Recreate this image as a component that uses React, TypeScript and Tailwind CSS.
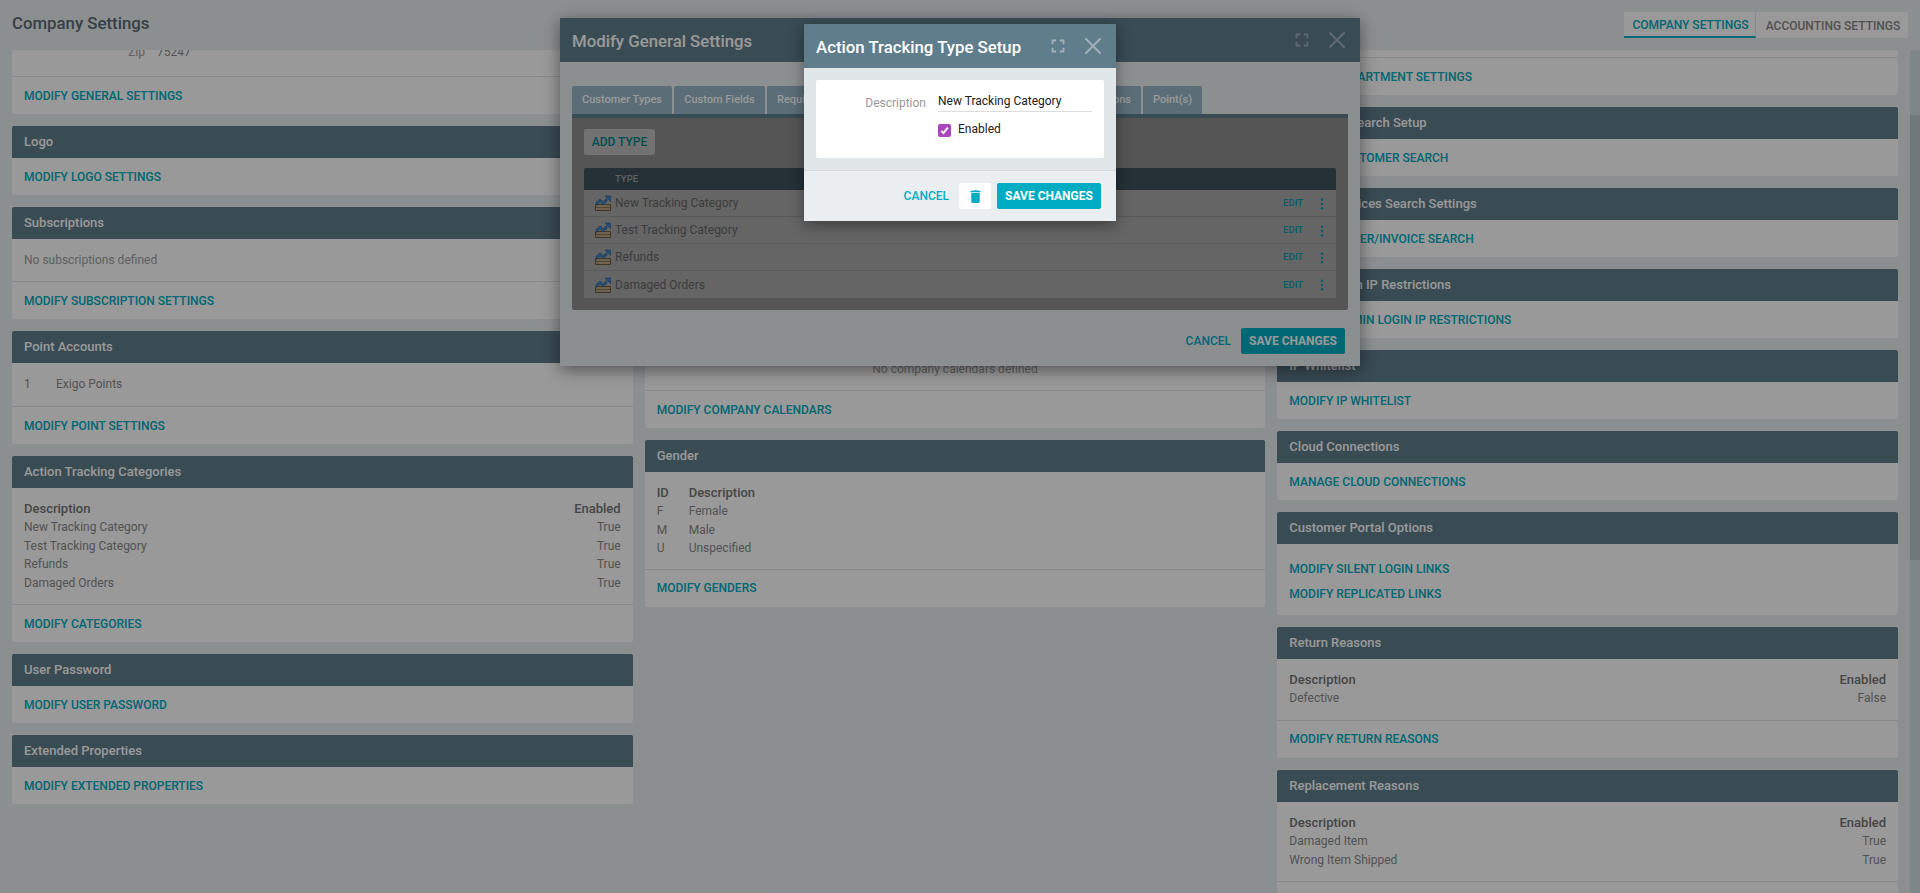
import React from 'react';
import { X } from 'lucide-react';

const roboto = { fontFamily: 'Roboto, sans-serif' };

function Fullscreen({ className }: { className?: string }) {
  return (
    <svg viewBox="0 0 24 24" fill="currentColor" className={className}>
      <path d="M7 14H5v5h5v-2H7v-3zm-2-4h2V7h3V5H5v5zm12 7h-3v2h5v-5h-2v3zM14 5v2h3v3h2V5h-5z" />
    </svg>
  );
}

function TrashIcon({ className }: { className?: string }) {
  return (
    <svg viewBox="0 0 24 24" fill="currentColor" className={className}>
      <path d="M6 19c0 1.1.9 2 2 2h8c1.1 0 2-.9 2-2V7H6v12zM19 4h-3.5l-1-1h-5l-1 1H5v2h14V4z" />
    </svg>
  );
}

function ChartIcon() {
  return (
    <svg viewBox="0 0 16 16" className="w-4 h-4 shrink-0">
      <path d="M0.5 9.5h15v6h-15z" fill="#b7a585" stroke="#6b5a40" strokeWidth="1" />
      <path d="M1 12.5h14" stroke="#8c7350" strokeWidth="1" />
      <path d="M1 7.5l4-3.5 3 2.5 4-3v3l-4 3-3-2.5-4 3.5z" fill="#3f7fbe" stroke="#2c6299" strokeWidth="0.6" />
      <path d="M10 1h5.5v5.5z" fill="#3f7fbe" stroke="#2c6299" strokeWidth="0.6" />
    </svg>
  );
}

function Card({ title, children }: { title?: string; children: React.ReactNode }) {
  return (
    <div className="bg-white rounded-[2px] overflow-hidden">
      {title && (
        <div className="h-8 bg-[#607d8b] text-white text-[13px] font-medium px-3 flex items-center">{title}</div>
      )}
      {children}
    </div>
  );
}

function Links({ label }: { label: string }) {
  return (
    <div className="h-[37px] flex items-center px-3">
      <a className="text-[12px] leading-none font-medium text-[#00acc1] uppercase">{label}</a>
    </div>
  );
}

function Body({ children }: { children: React.ReactNode }) {
  return <div className="px-3 py-3 border-b border-[#e2e6e9] text-[12px] leading-[18px] text-[#a0a0a0]">{children}</div>;
}

function DataBody({ children }: { children: React.ReactNode }) {
  return <div className="px-3 py-3 border-b border-[#e2e6e9] text-[12px] leading-[18.4px] text-[#8a8a8a]">{children}</div>;
}

function ValueTable({ rows }: { rows: string[][] }) {
  return (
    <DataBody>
      <div className="flex justify-between text-[13px] font-medium text-[#757575]">
        <span>Description</span>
        <span>Enabled</span>
      </div>
      {rows.map((r) => (
        <div key={r[0]} className="flex justify-between">
          <span>{r[0]}</span>
          <span>{r[1]}</span>
        </div>
      ))}
    </DataBody>
  );
}

const types = ['New Tracking Category', 'Test Tracking Category', 'Refunds', 'Damaged Orders'];

function GeneralModal() {
  return (
    <div className="absolute left-[560px] top-[18px] w-[800px] h-[348px] bg-[#eaeef1] shadow-[0_4px_16px_rgba(0,0,0,0.45)] flex flex-col">
      <div className="h-11 shrink-0 bg-[#607d8b] flex items-center pl-3 pr-[9px] text-white">
        <div className="text-[16.8px] font-medium flex-1 pt-[3px]">Modify General Settings</div>
        <Fullscreen className="w-[22px] h-[22px] opacity-40 mr-[10px]" />
        <X className="w-7 h-7 opacity-40" strokeWidth={1.7} />
      </div>
      <div className="px-3 pt-6 flex gap-[2px] h-[52px] shrink-0 text-white text-[11px] font-medium">
        <div className="h-7 w-[100px] rounded-t-[2px] bg-[#98b7c8] flex items-center justify-center">Customer Types</div>
        <div className="h-7 w-[91px] rounded-t-[2px] bg-[#98b7c8] flex items-center justify-center">Custom Fields</div>
        <div className="h-7 w-[110px] rounded-t-[2px] bg-[#98b7c8] px-[10px] flex items-center">Required Fields</div>
        <div className="h-7 w-[160px] rounded-t-[2px] bg-[#98b7c8]" />
        <div className="h-7 w-[100px] rounded-t-[2px] bg-[#98b7c8] px-[10px] flex items-center justify-end">Options</div>
        <div className="h-7 w-[59px] rounded-t-[2px] bg-[#98b7c8] flex items-center justify-center">Point(s)</div>
      </div>
      <div className="mx-3 h-[196px] shrink-0 border-t-4 border-[#607d8b] bg-[#8e8e8e] rounded-b-[2px] px-3 pt-[11px]">
        <div className="h-[26px] w-[71px] rounded-[2px] bg-[#bebebe] text-[#00818f] text-[12px] font-medium flex items-center justify-center">ADD TYPE</div>
        <div className="mt-[13px] h-[22px] rounded-t-[2px] bg-[#3f505d] text-[#a4a4a4] text-[9.5px] font-medium pl-[31px] flex items-center">TYPE</div>
        {types.map((t) => (
          <div key={t} className="h-[27px] bg-[#a8a8a8] border-b border-[#979797] last:border-b-0 flex items-center pl-[11px] pr-[12px] text-[#666] text-[12px]">
            <ChartIcon />
            <span className="ml-[4px] flex-1">{t}</span>
            <span className="text-[#0a9aae] text-[9.5px] font-medium mr-[17px] pt-px">EDIT</span>
            <svg viewBox="0 0 4 14" className="w-[4px] h-[12px] fill-[#0a9aae] mt-px">
              <circle cx="2" cy="2" r="1.4" /><circle cx="2" cy="7" r="1.4" /><circle cx="2" cy="12" r="1.4" />
            </svg>
          </div>
        ))}
      </div>
      <div className="flex items-center justify-end gap-[10px] pr-[15px] pt-[18px]">
        <span className="text-[#00acc1] text-[12px] font-medium">CANCEL</span>
        <span className="h-[26px] w-[104px] rounded-[2px] bg-[#00acc1] text-white text-[12px] font-bold flex items-center justify-center">SAVE CHANGES</span>
      </div>
    </div>
  );
}

function TypeModal() {
  return (
    <div className="absolute left-[804px] top-[24px] w-[312px] h-[197px] bg-[#e1e6e9] shadow-[0_4px_14px_rgba(0,0,0,0.4)] flex flex-col">
      <div className="h-11 shrink-0 bg-[#607d8b] flex items-center pl-3 pr-[9px] text-white">
        <div className="text-[16.8px] font-medium flex-1 pt-[3px]">Action Tracking Type Setup</div>
        <Fullscreen className="w-[22px] h-[22px] opacity-40 mr-[10px]" />
        <X className="w-7 h-7 opacity-40" strokeWidth={1.7} />
      </div>
      <div className="h-[103px] shrink-0 p-3 border-b border-[#d5dce0]">
        <div className="h-[78px] bg-white rounded-[2px] flex pt-[9px] text-[12px]">
          <div className="w-[110px] text-right text-[#999] leading-[18px] pt-[5px]">Description</div>
          <div className="ml-3 w-[154px]">
            <div className="h-[23px] border-b border-[#ddd] flex items-center pt-px text-[#212121]">New Tracking Category</div>
            <div className="mt-[9px] flex items-center h-[18px] text-[#212121]">
              <span className="w-[13px] h-[13px] rounded-[2px] bg-[#ab47bc] flex items-center justify-center mr-[7px]">
                <svg viewBox="0 0 12 12" className="w-[11px] h-[11px]" fill="none" stroke="#fff" strokeWidth="2"><path d="M2.5 6.5l2.4 2.4 4.6-6" /></svg>
              </span>
              <span className="-mt-[2px]">Enabled</span>
            </div>
          </div>
        </div>
      </div>
      <div className="flex-1 bg-[#eaeef1] flex items-center justify-end pr-[15px]">
        <span className="text-[#00acc1] text-[12px] font-medium mr-[10px]">CANCEL</span>
        <span className="h-[26px] w-8 rounded-[2px] bg-white flex items-center justify-center text-[#00acc1] mr-[6px]"><TrashIcon className="w-[17px] h-[17px]" /></span>
        <span className="h-[26px] w-[104px] rounded-[2px] bg-[#00acc1] text-white text-[12px] font-bold flex items-center justify-center">SAVE CHANGES</span>
      </div>
    </div>
  );
}

export default function App() {
  return (
    <div className="relative w-[1920px] h-[893px] overflow-hidden bg-[#eaeef1]" style={roboto}>
      <div className="h-[50px] flex items-start justify-between pl-3 pr-3">
        <div className="text-[16.8px] font-medium text-[#5d6a75] mt-[11px]">Company Settings</div>
        <div className="flex mt-3 h-[26px] text-[12px] font-medium bg-white">
          <div className="w-[132px] pt-px pl-[2px] flex items-center justify-center border-b-2 border-[#00acc1] text-[#00acc1] border-r border-r-[#e2e6e9]">COMPANY SETTINGS</div>
          <div className="w-[152px] pt-px pl-[2px] flex items-center justify-center text-[#888]">ACCOUNTING SETTINGS</div>
        </div>
      </div>

      <div className="h-[843px] flex pl-3 overflow-hidden">
        <div className="w-[1886px] grid grid-cols-3 gap-3 items-start">
          <div className="flex flex-col gap-3">
            <Card>
              <div className="h-[27px] border-b border-[#e2e6e9] flex items-end pb-[15px] overflow-hidden text-[12px] leading-[18px] text-[#8a8a8a]">
                <span className="w-[133px] text-right text-[#a0a0a0]">Zip</span>
                <span className="ml-3">75247</span>
              </div>
              <Links label="Modify General Settings" />
            </Card>
            <Card title="Logo"><Links label="Modify Logo Settings" /></Card>
            <Card title="Subscriptions">
              <Body>No subscriptions defined</Body>
              <Links label="Modify Subscription Settings" />
            </Card>
            <Card title="Point Accounts">
              <DataBody>
                <div className="flex h-[19px] items-center"><span className="w-8">1</span><span>Exigo Points</span></div>
              </DataBody>
              <Links label="Modify Point Settings" />
            </Card>
            <Card title="Action Tracking Categories">
              <ValueTable rows={[['New Tracking Category', 'True'], ['Test Tracking Category', 'True'], ['Refunds', 'True'], ['Damaged Orders', 'True']]} />
              <Links label="Modify Categories" />
            </Card>
            <Card title="User Password"><Links label="Modify User Password" /></Card>
            <Card title="Extended Properties"><Links label="Modify Extended Properties" /></Card>
          </div>

          <div className="flex flex-col gap-3 pt-[266px]">
            <Card title="Company Calendars">
              <Body><div className="text-center">No company calendars defined</div></Body>
              <Links label="Modify Company Calendars" />
            </Card>
            <Card title="Gender">
              <div className="px-3 pt-3 pb-[11px] border-b border-[#e2e6e9] text-[12px] leading-[18.4px] text-[#8a8a8a]">
                <div className="flex text-[13px] font-medium text-[#757575]"><span className="w-8">ID</span><span>Description</span></div>
                <div className="flex"><span className="w-8">F</span><span>Female</span></div>
                <div className="flex"><span className="w-8">M</span><span>Male</span></div>
                <div className="flex"><span className="w-8">U</span><span>Unspecified</span></div>
              </div>
              <Links label="Modify Genders" />
            </Card>
          </div>

          <div className="flex flex-col gap-3">
            <Card>
              <div className="h-2 border-b border-[#e2e6e9]" />
              <Links label="Modify Department Settings" />
            </Card>
            <Card title="Customer Search Setup"><Links label="Modify Customer Search" /></Card>
            <Card title="Orders/Invoices Search Settings"><Links label="Modify Order/Invoice Search" /></Card>
            <Card title="Admin Login IP Restrictions"><Links label="Modify Admin Login IP Restrictions" /></Card>
            <Card title="IP Whitelist"><Links label="Modify IP Whitelist" /></Card>
            <Card title="Cloud Connections"><Links label="Manage Cloud Connections" /></Card>
            <Card title="Customer Portal Options">
              <div className="px-3 pt-3 pb-[9px] flex flex-col">
                <a className="h-[25px] flex items-center text-[12px] font-medium text-[#00acc1]">MODIFY SILENT LOGIN LINKS</a>
                <a className="h-[25px] flex items-center text-[12px] font-medium text-[#00acc1]">MODIFY REPLICATED LINKS</a>
              </div>
            </Card>
            <Card title="Return Reasons">
              <ValueTable rows={[['Defective', 'False']]} />
              <Links label="Modify Return Reasons" />
            </Card>
            <Card title="Replacement Reasons">
              <ValueTable rows={[['Damaged Item', 'True'], ['Wrong Item Shipped', 'True']]} />
              <Links label="Modify Replacement Reasons" />
            </Card>
          </div>
        </div>
        <div className="w-[10px] ml-3 bg-[#d4dfe3] shrink-0">
          <div className="mt-[65px] h-[445px] bg-[#bdcacd]" />
        </div>
      </div>

      <GeneralModal />
      <div className="absolute inset-0 bg-black/40" />
      <TypeModal />
    </div>
  );
}
